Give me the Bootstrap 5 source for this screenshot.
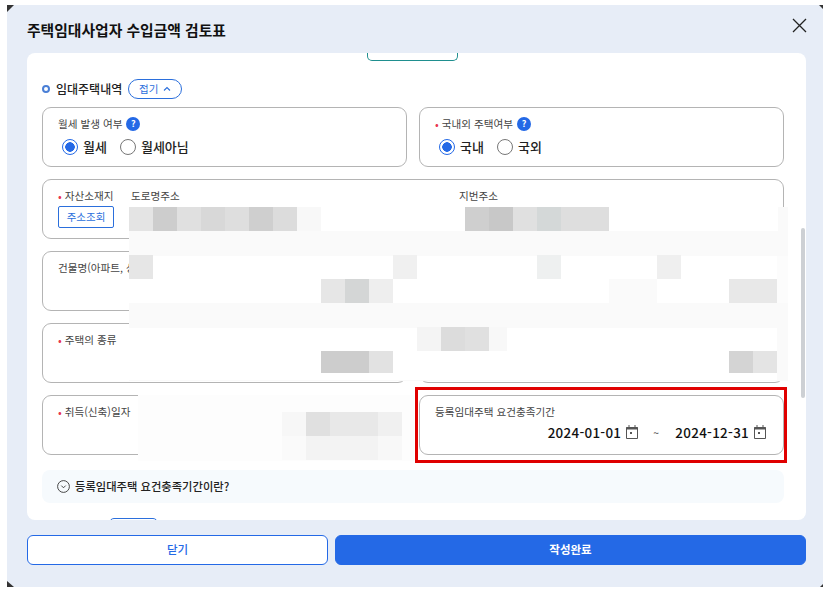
<!DOCTYPE html>
<html lang="ko">
<head>
<meta charset="utf-8">
<title>주택임대사업자 수입금액 검토표</title>
<link rel="stylesheet" href="https://cdn.jsdelivr.net/npm/bootstrap@5.3.0/dist/css/bootstrap.min.css">
<style>
html,body{height:100%;overflow:hidden;background:#fff;font-family:"Noto Sans CJK KR","Noto Sans",sans-serif;color:#222;}
.stage{position:relative;width:832px;height:596px;padding:5px 9px 9px 7px;}
.win{height:582px;background:#e7edf7;padding:0 17px 0 20px;position:relative;display:flex;flex-direction:column;}
.corner{position:absolute;width:0;height:0;}
.c1{left:0;top:0;border-top:7px solid #333;border-right:7px solid transparent;}
.c2{right:0;top:0;border-top:4px solid #333;border-left:4px solid transparent;}
.c3{left:0;bottom:0;border-bottom:6px solid #333;border-right:7px solid transparent;}
.c4{right:0;bottom:0;border-bottom:3px solid #333;border-left:3px solid transparent;}
.win-head{height:48px;flex:none;}
.win-title{font-size:14.8px;font-weight:700;color:#111;margin:0;padding-top:14px;line-height:21px;}
.x-btn{position:absolute;right:16px;top:12px;width:16px;height:16px;padding:0;border:0;background:none;display:block;}
.x-btn svg{display:block;}
.win-body{height:467px;flex:none;background:#fff;border-radius:8px;overflow:hidden;position:relative;padding:0 22px 0 15px;}
.stub{width:91px;height:8px;margin-left:325px;border:1px solid #1f8f8f;border-top:0;border-radius:0 0 5px 5px;}
.sec-line{margin-top:18px;height:20px;gap:6px;}
.dot{width:8px;height:8px;border:2px solid #4a7fd6;border-radius:50%;flex:none;}
.sec-title{font-size:12px;font-weight:500;color:#222;}
.chip{width:54px;height:20px;border:1px solid #2b6fdc;border-radius:10px;color:#2b6fdc;background:#fff;font-size:10.5px;padding:0;gap:5px;}
.form-grid{display:grid;grid-template-columns:365px 365px;column-gap:12px;row-gap:12px;margin-top:8px;}
.span-all{grid-column:1 / 3;}
.fcard{height:60px;border:1px solid #b4b4b4;border-radius:9px;padding:9px 15px;background:#fff;position:relative;}
.flabel{font-size:10.6px;line-height:14px;color:#444;display:flex;align-items:center;gap:3px;white-space:nowrap;}
.req{color:#e8364f;font-size:11px;margin-right:0;}
.qmark{width:14px;height:14px;border-radius:50%;background:#2469e6;color:#fff;font-size:9px;font-weight:700;display:inline-flex;align-items:center;justify-content:center;margin-left:1px;}
.radios{display:flex;align-items:center;gap:13px;margin:7px 0 0 4px;height:17px;}
.radio-item{display:flex;align-items:center;gap:5px;font-size:13px;font-weight:500;color:#222;margin:0;padding:0;min-height:0;}
.radio-item .form-check-input{width:16px;height:16px;margin:0;float:none;border:1px solid #777;background-color:#fff;background-image:none;}
.radio-item .form-check-input:checked{border:1px solid #2469e6;background-color:#fff;background-image:radial-gradient(circle,#2469e6 0,#2469e6 4.5px,#fff 5px);}
.addr-btn{width:56px;height:22px;border:1px solid #2b6fdc;border-radius:2px;color:#2b6fdc;background:#fff;font-size:10.5px;padding:0;margin-top:3px;line-height:1;display:block;}
.addr-cols{position:absolute;top:8px;left:88px;font-size:10.6px;line-height:15px;color:#444;display:flex;}
.addr-a{width:328px;}
.dates{display:flex;justify-content:flex-end;align-items:center;margin-top:3px;padding-right:2px;font-size:13.4px;font-weight:500;color:#111;letter-spacing:.3px;}
.dates svg{margin-left:5px;flex:none;}
.tilde{margin:0 16px 0 15px;font-size:10px;color:#555;}
.help-row{margin-top:15px;width:742px;height:33px;background:#f6fafd;border-radius:8px;padding:0 15px;gap:5px;font-size:11.3px;font-weight:500;color:#222;}
.next-chip{width:49px;height:10px;margin:15px 0 0 67px;border:1px solid #2b6fdc;border-radius:10px;}
.sbar{position:absolute;right:1px;top:175px;width:4px;height:170px;background:#cdd0d4;border-radius:2px;}
.win-foot{flex:none;display:flex;gap:7px;margin-top:15px;}
.foot-btn{height:30px;font-size:11.5px;font-weight:500;padding:0;border-radius:6px;line-height:1;}
.btn-close-alt{width:301px;background:#fff;border:1px solid #2469e6;color:#2469e6;}
.btn-done{width:471px;background:#2469e6;border:1px solid #2469e6;color:#fff;font-weight:700;}
.veil{position:absolute;left:0;top:0;pointer-events:none;}
.mark-box{position:absolute;left:415px;top:387px;width:372px;height:76px;border:3px solid #e00000;pointer-events:none;}
</style>
</head>
<body>
<div class="stage">
  <div class="win">
    <span class="corner c1"></span><span class="corner c2"></span><span class="corner c3"></span><span class="corner c4"></span>
    <div class="win-head"><h1 class="win-title">주택임대사업자 수입금액 검토표</h1></div>
    <button class="x-btn" aria-label="닫기"><svg width="16" height="16" viewBox="0 0 16 16"><path d="M2 2 L15 15 M15 2 L2 15" stroke="#222" stroke-width="1.3" fill="none"/></svg></button>
    <div class="win-body">
      <div class="stub"></div>
      <div class="d-flex align-items-center sec-line">
        <span class="dot"></span><span class="sec-title">임대주택내역</span>
        <button class="btn chip d-flex align-items-center justify-content-center">접기 <svg width="8" height="6" viewBox="0 0 8 6"><path d="M1 4.5 L4 1.5 L7 4.5" stroke="#2b6fdc" stroke-width="1.1" fill="none"/></svg></button>
      </div>
      <div class="form-grid">
        <div class="fcard">
          <div class="flabel">월세 발생 여부 <span class="qmark">?</span></div>
          <div class="radios">
            <label class="radio-item form-check"><input class="form-check-input" type="radio" name="r1" checked>월세</label>
            <label class="radio-item form-check"><input class="form-check-input" type="radio" name="r1">월세아님</label>
          </div>
        </div>
        <div class="fcard">
          <div class="flabel"><span class="req">•</span>국내외 주택여부 <span class="qmark">?</span></div>
          <div class="radios">
            <label class="radio-item form-check"><input class="form-check-input" type="radio" name="r2" checked>국내</label>
            <label class="radio-item form-check"><input class="form-check-input" type="radio" name="r2">국외</label>
          </div>
        </div>
        <div class="fcard span-all">
          <div class="flabel"><span class="req">•</span>자산소재지</div>
          <button class="btn addr-btn">주소조회</button>
          <div class="addr-cols"><span class="addr-a">도로명주소</span><span>지번주소</span></div>
        </div>
        <div class="fcard"><div class="flabel">건물명(아파트, 상가명)</div></div>
        <div class="fcard"></div>
        <div class="fcard"><div class="flabel"><span class="req">•</span>주택의 종류</div></div>
        <div class="fcard"></div>
        <div class="fcard"><div class="flabel"><span class="req">•</span>취득(신축)일자</div></div>
        <div class="fcard">
          <div class="flabel">등록임대주택 요건충족기간</div>
          <div class="dates">
            <span>2024-01-01</span>
            <svg width="12" height="14" viewBox="0 0 12 14"><path d="M3 0v2M9 0v2" stroke="#555"/><path d="M.5 2.5h11v11H.5z" fill="none" stroke="#555"/><path d="M.5 2h11v2.5H.5z" fill="#555"/><rect x="4" y="7" width="2" height="2" fill="#555"/></svg>
            <span class="tilde">~</span>
            <span>2024-12-31</span>
            <svg width="12" height="14" viewBox="0 0 12 14"><path d="M3 0v2M9 0v2" stroke="#555"/><path d="M.5 2.5h11v11H.5z" fill="none" stroke="#555"/><path d="M.5 2h11v2.5H.5z" fill="#555"/><rect x="4" y="7" width="2" height="2" fill="#555"/></svg>
          </div>
        </div>
      </div>
      <div class="d-flex align-items-center help-row">
        <svg width="13" height="13" viewBox="0 0 13 13"><circle cx="6.5" cy="6.5" r="5.9" fill="none" stroke="#333" stroke-width=".9"/><path d="M4.3 5.6 L6.5 7.8 L8.7 5.6" fill="none" stroke="#333" stroke-width=".9"/></svg>
        등록임대주택 요건충족기간이란?
      </div>
      <div class="next-chip"></div>
      <div class="sbar"></div>
    </div>
    <div class="win-foot">
      <button class="btn foot-btn btn-close-alt">닫기</button>
      <button class="btn foot-btn btn-done">작성완료</button>
    </div>
  </div>
  <svg class="veil" width="832" height="596" aria-hidden="true">
    <rect x="129" y="207" width="659" height="174" fill="#fafafa"/>
    <rect x="129" y="207" width="649" height="24" fill="#fff"/>
    <rect x="129" y="256" width="648" height="47" fill="#fff"/>
    <rect x="129" y="328" width="648" height="52" fill="#fff"/>
    <rect x="777" y="256" width="11" height="47" fill="#fcfcfc"/>
    <rect x="138" y="395" width="276" height="66" fill="#fdfdfd"/>
    <g>
      <rect x="129" y="207" width="24" height="24" fill="#e4e4e4"/><rect x="153" y="207" width="24" height="24" fill="#cdcdcd"/><rect x="177" y="207" width="24" height="24" fill="#e0e0e0"/><rect x="201" y="207" width="24" height="24" fill="#d8d8d8"/><rect x="225" y="207" width="24" height="24" fill="#dedede"/><rect x="249" y="207" width="24" height="24" fill="#cfcfcf"/><rect x="273" y="207" width="24" height="24" fill="#dcdcdc"/><rect x="297" y="207" width="24" height="24" fill="#f8f8f8"/>
      <rect x="465" y="207" width="24" height="24" fill="#cfcfcf"/><rect x="489" y="207" width="24" height="24" fill="#c8c8c8"/><rect x="513" y="207" width="24" height="24" fill="#e0e0e0"/><rect x="537" y="207" width="24" height="24" fill="#d4d8d8"/><rect x="561" y="207" width="48" height="24" fill="#dedede"/>
      <rect x="129" y="255" width="24" height="24" fill="#e6e6e6"/><rect x="393" y="255" width="24" height="24" fill="#f0f0f0"/><rect x="537" y="255" width="24" height="24" fill="#eef0f0"/><rect x="657" y="255" width="24" height="24" fill="#efefef"/>
      <rect x="321" y="279" width="24" height="24" fill="#e6e6e6"/><rect x="345" y="279" width="24" height="24" fill="#d4d6d6"/><rect x="369" y="279" width="24" height="24" fill="#eeeeee"/><rect x="609" y="279" width="48" height="24" fill="#fafafa"/><rect x="729" y="279" width="48" height="24" fill="#e8e8e8"/>
      <rect x="417" y="327" width="24" height="24" fill="#f4f4f4"/><rect x="441" y="327" width="24" height="24" fill="#dcdcdc"/><rect x="465" y="327" width="24" height="24" fill="#e0e0e0"/><rect x="489" y="327" width="18" height="24" fill="#f8f8f8"/>
      <rect x="321" y="351" width="48" height="22" fill="#cdcdcd"/><rect x="369" y="351" width="24" height="22" fill="#e2e2e2"/><rect x="729" y="351" width="24" height="22" fill="#d4d4d4"/><rect x="753" y="351" width="24" height="22" fill="#e4e4e4"/>
      <rect x="282" y="412" width="24" height="24" fill="#f7f7f7"/><rect x="306" y="412" width="24" height="24" fill="#e0e0e0"/><rect x="330" y="412" width="48" height="24" fill="#e8e8e8"/><rect x="378" y="412" width="24" height="24" fill="#f0f0f0"/>
      <rect x="282" y="436" width="24" height="24" fill="#fafafa"/><rect x="306" y="436" width="72" height="24" fill="#f3f3f3"/><rect x="378" y="436" width="24" height="24" fill="#f8f8f8"/>
    </g>
  </svg>
  <div class="mark-box"></div>
</div>
<script src="https://cdn.jsdelivr.net/npm/bootstrap@5.3.0/dist/js/bootstrap.bundle.min.js"></script>
</body>
</html>
